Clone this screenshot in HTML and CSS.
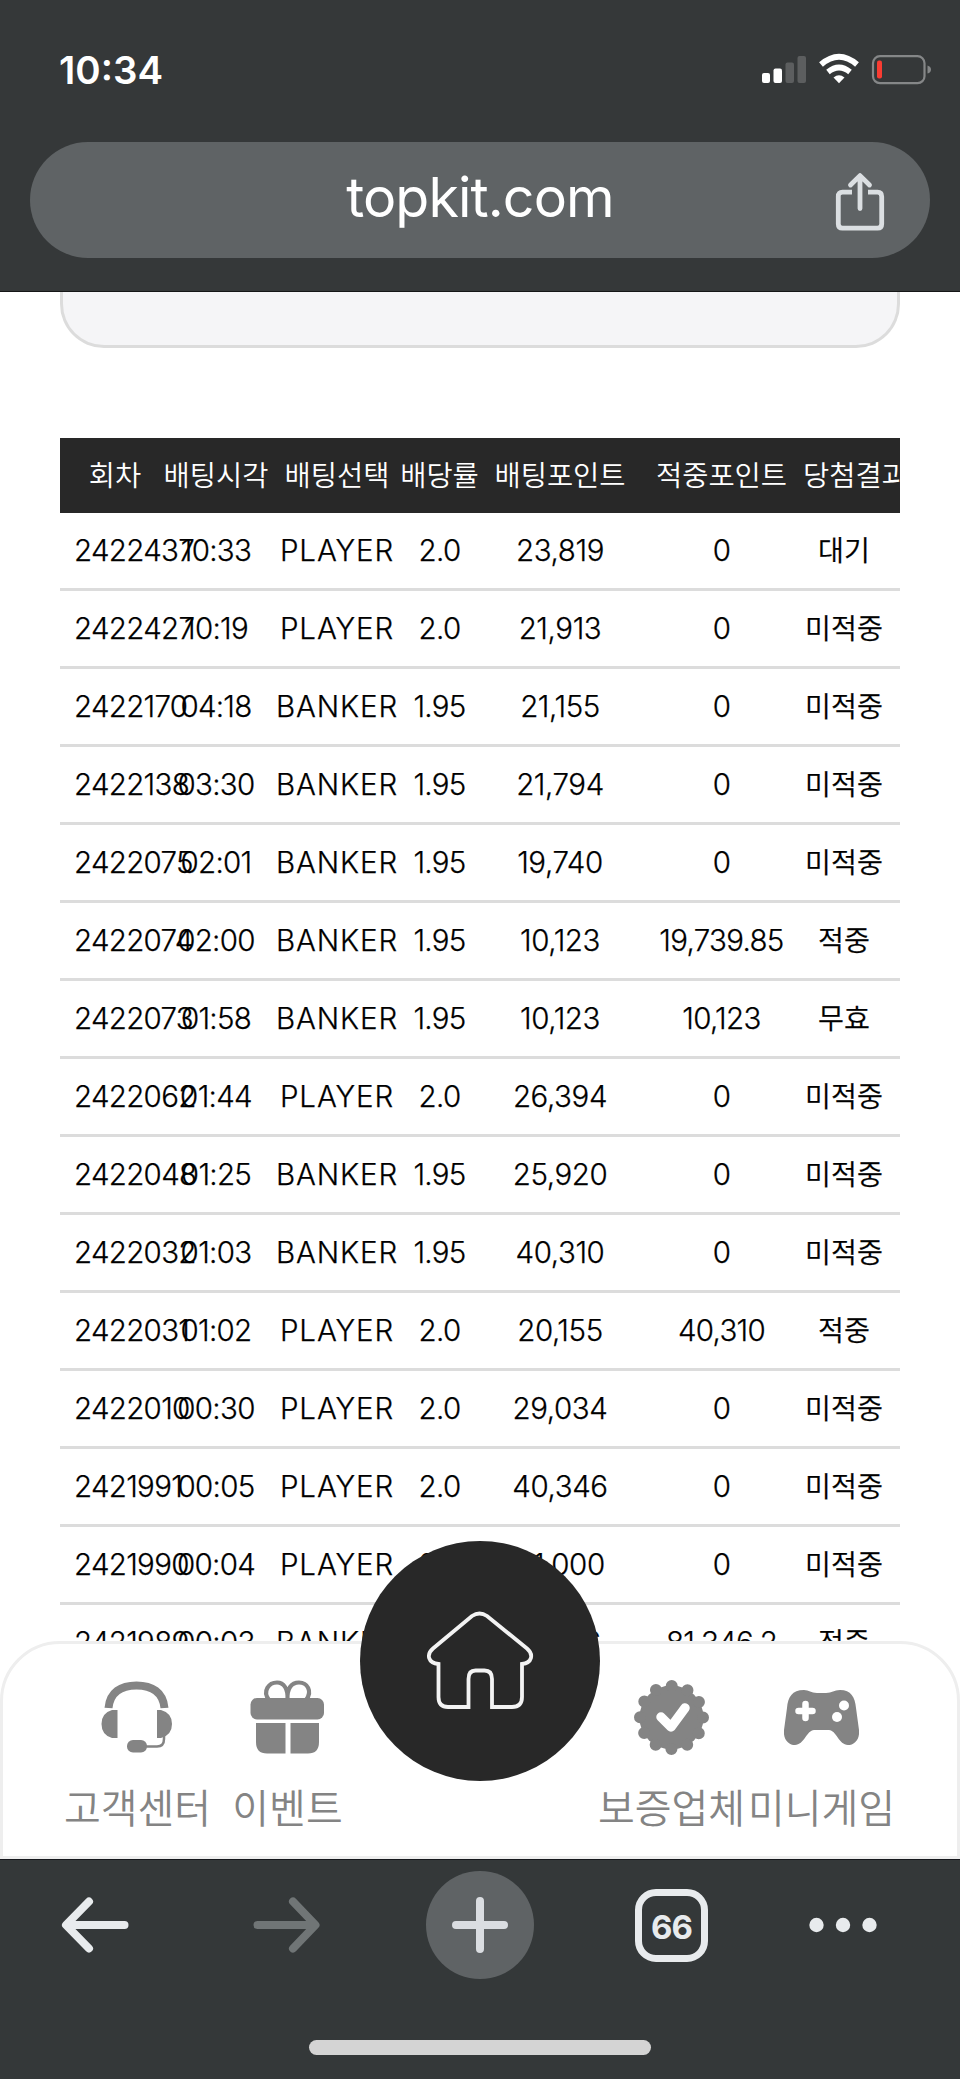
FILE: index.html
```html
<!DOCTYPE html>
<html lang="ko">
<head>
<meta charset="utf-8">
<title>topkit.com</title>
<link rel="stylesheet" href="styles.css">
</head>
<body>
<header class="browser-top">
  <div class="status">
    <span class="clock">10:34</span>
    <svg class="status-icons" width="172" height="32" viewBox="0 0 172 32">
      <g fill="#fff"><rect x="2" y="20" width="8" height="10" rx="2"/><rect x="13.500" y="15.500" width="8.500" height="14.500" rx="2"/></g>
      <g fill="#5c5e5f"><rect x="25.500" y="9.500" width="8.500" height="20.500" rx="2"/><rect x="37.500" y="3" width="8.500" height="27" rx="2"/></g>
      <g fill="none" stroke="#fff"><path d="M61 11.500Q79-4 97 11.500" stroke-width="5.800"/><path d="M68 19Q79 10 90 19" stroke-width="5.600"/></g>
      <path d="M73.500 24.500Q79 20 84.500 24.500L79 30.200Z" fill="#fff"/>
      <rect x="113" y="3.200" width="51.500" height="27" rx="7" fill="none" stroke="#858788" stroke-width="2.200"/>
      <rect x="117" y="7.500" width="5" height="18" rx="2" fill="#fa3c32"/>
      <path d="M167.500 12.500Q171 13.500 171 16.500T167.500 20.500Z" fill="#858788"/>
    </svg>
  </div>
  <div class="address">
    <span class="url">topkit.com</span>
    <svg class="share" width="50" height="60" viewBox="0 0 50 60" fill="none" stroke="#dbdfe2" stroke-width="4.800" stroke-linecap="round" stroke-linejoin="round">
      <path d="M17 20.200H7.500Q3.300 20.200 3.300 24.400V52Q3.300 56.200 7.500 56.200H42.500Q46.700 56.200 46.700 52V24.400Q46.700 20.200 42.500 20.200H33" stroke-linecap="butt"/>
      <path d="M25 36.500V4M15.500 13L25 3.600L34.500 13"/>
    </svg>
  </div>
</header>

<main class="page">
  <div class="panel"></div>
  <div class="bets">
    <div class="row head"><span>회차</span><span>배팅시각</span><span>배팅선택</span><span>배당률</span><span>배팅포인트</span><span>적중포인트</span><span>당첨결과</span></div>
    <div class="row"><span>2422437</span><span>10:33</span><span>PLAYER</span><span>2.0</span><span>23,819</span><span>0</span><span>대기</span></div>
    <div class="row"><span>2422427</span><span>10:19</span><span>PLAYER</span><span>2.0</span><span>21,913</span><span>0</span><span>미적중</span></div>
    <div class="row"><span>2422170</span><span>04:18</span><span>BANKER</span><span>1.95</span><span>21,155</span><span>0</span><span>미적중</span></div>
    <div class="row"><span>2422138</span><span>03:30</span><span>BANKER</span><span>1.95</span><span>21,794</span><span>0</span><span>미적중</span></div>
    <div class="row"><span>2422075</span><span>02:01</span><span>BANKER</span><span>1.95</span><span>19,740</span><span>0</span><span>미적중</span></div>
    <div class="row"><span>2422074</span><span>02:00</span><span>BANKER</span><span>1.95</span><span>10,123</span><span>19,739.85</span><span>적중</span></div>
    <div class="row"><span>2422073</span><span>01:58</span><span>BANKER</span><span>1.95</span><span>10,123</span><span>10,123</span><span>무효</span></div>
    <div class="row"><span>2422062</span><span>01:44</span><span>PLAYER</span><span>2.0</span><span>26,394</span><span>0</span><span>미적중</span></div>
    <div class="row"><span>2422048</span><span>01:25</span><span>BANKER</span><span>1.95</span><span>25,920</span><span>0</span><span>미적중</span></div>
    <div class="row"><span>2422032</span><span>01:03</span><span>BANKER</span><span>1.95</span><span>40,310</span><span>0</span><span>미적중</span></div>
    <div class="row"><span>2422031</span><span>01:02</span><span>PLAYER</span><span>2.0</span><span>20,155</span><span>40,310</span><span>적중</span></div>
    <div class="row"><span>2422010</span><span>00:30</span><span>PLAYER</span><span>2.0</span><span>29,034</span><span>0</span><span>미적중</span></div>
    <div class="row"><span>2421991</span><span>00:05</span><span>PLAYER</span><span>2.0</span><span>40,346</span><span>0</span><span>미적중</span></div>
    <div class="row"><span>2421990</span><span>00:04</span><span>PLAYER</span><span>2.0</span><span>41,000</span><span>0</span><span>미적중</span></div>
    <div class="row"><span>2421989</span><span>00:03</span><span>BANKER</span><span>1.95</span><span>41,716</span><span>81,346.2</span><span>적중</span></div>
  </div>

  <nav class="dock">
    <a class="dock-item">
      <svg width="75" height="75" viewBox="0 0 75 75" fill="#848484">
        <path d="M8.500 28C10 12 21 5.500 36.500 5.500S63 12 64.500 28" fill="none" stroke="#848484" stroke-width="8"/>
        <path d="M17.500 30H12Q1.500 33 1.500 44T12 58H17.500ZM57 30H61Q72 33 72 44T61 58H57Z"/>
        <path d="M64 56V59Q64 66.500 57 66.500H46" fill="none" stroke="#848484" stroke-width="2.500"/>
        <rect x="27" y="60" width="20" height="12.500" rx="6"/>
      </svg>
      <span>고객센터</span>
    </a>
    <a class="dock-item">
      <svg width="75" height="75" viewBox="0 0 75 75" fill="#848484">
        <path d="M19 20C12 11 19 2.500 27 2.500C34 2.500 38 9 37.500 19C37 9 41 2.500 49 2.500C57 2.500 63 11 56 20" fill="none" stroke="#848484" stroke-width="4.200"/>
        <rect x=".500" y="18" width="73.500" height="21.500" rx="6.500"/>
        <path d="M6 43H35.500V73.500H17Q6 73.500 6 62ZM40.500 43H69V62Q69 73.500 58 73.500H40.500Z"/>
      </svg>
      <span>이벤트</span>
    </a>
    <a class="dock-home">
      <svg width="110" height="102" viewBox="0 0 110 102" fill="none" stroke="#f3f3f3" stroke-width="3.800">
        <path d="M47 6Q54.500 1 62 6L102 38.500C109 44.500 107 53 97 54V87Q97 97 87 97H67V69Q67 60.500 59.500 60.500H50.500Q43.500 60.500 43.500 69V97H23Q13.500 97 13.500 87V54C3 53 1 44.500 8 38.500Z"/>
      </svg>
    </a>
    <a class="dock-item">
      <svg width="75" height="75" viewBox="0 0 75 75">
        <circle cx="37.500" cy="37.500" r="32" fill="#848484"/>
        <circle cx="37.500" cy="37.500" r="31.500" fill="none" stroke="#848484" stroke-width="12" stroke-linecap="round" stroke-dasharray="0 16.493"/>
        <path d="M27 37L37 47L51 28" fill="none" stroke="#fff" stroke-width="9.500" stroke-linecap="round" stroke-linejoin="round"/>
      </svg>
      <span>보증업체</span>
    </a>
    <a class="dock-item">
      <svg width="75" height="75" viewBox="0 0 75 75">
        <path fill="#848484" d="M20 10C25 10 27 13 33 13H42C48 13 50 10 56 10C67 10 71 17 72 28L75 50C76 60 70 65 64 65C55 65 52 50 45 50H30C23 50 20 65 11 65C5 65-1 60 0 50L3 28C4 17 8 10 20 10Z"/>
        <path d="M21.500 24V38M14.500 31H28.500" stroke="#fff" stroke-width="6.500" stroke-linecap="round"/>
        <circle cx="60" cy="25.500" r="5" fill="#fff"/><circle cx="53" cy="37" r="5" fill="#fff"/>
      </svg>
      <span>미니게임</span>
    </a>
  </nav>
</main>

<footer class="browser-bottom">
  <div class="tools">
    <svg class="back" width="68" height="56" viewBox="0 0 68 56" fill="none" stroke="#e8ebed" stroke-width="8" stroke-linecap="round" stroke-linejoin="round"><path d="M63.500 28H6M28 4.500L5 28L28 51.500"/></svg>
    <svg class="forward" width="68" height="56" viewBox="0 0 68 56" fill="none" stroke="#707576" stroke-width="8" stroke-linecap="round" stroke-linejoin="round"><path d="M5.500 28H63M41 4.500L63.500 28L41 51.500"/></svg>
    <div class="new-tab"><svg width="56" height="56" viewBox="0 0 56 56" stroke="#dadde1" stroke-width="8" stroke-linecap="round"><path d="M28 4V52M4 28H52"/></svg></div>
    <div class="tabs">66</div>
    <svg width="68" height="16" viewBox="0 0 68 16" fill="#e8ebed"><circle cx="7.500" cy="8" r="7.200"/><circle cx="34" cy="8" r="7.200"/><circle cx="60.500" cy="8" r="7.200"/></svg>
  </div>
  <div class="home-bar"></div>
</footer>
</body>
</html>
```

FILE: styles.css
```css
* { box-sizing: border-box; }

body {
  margin: 0;
  width: 960px;
  height: 2079px;
  display: flex;
  flex-direction: column;
  overflow: hidden;
  background: #fff;
  font-family: Inter, "Noto Sans CJK KR", sans-serif;
}

svg { display: block; }

.browser-top {
  height: 292px;
  flex: none;
  padding: 0 30px;
  background: #353839;
  border-bottom: 1px solid #151617;
}

.status {
  height: 142px;
  display: flex;
  justify-content: space-between;
  padding: 46px 0 0 29px;
}

.clock {
  font: 600 38.5px/48px Inter, sans-serif;
  color: #fff;
}

.status-icons { margin: 7px -2px 0 0; }

.address {
  height: 116px;
  border-radius: 58px;
  background: #5f6365;
  display: grid;
  grid-template-columns: 100px 1fr 100px;
  align-items: center;
}

.url {
  grid-column: 2;
  padding-bottom: 6px;
  text-align: center;
  font: 400 55.5px/70px Inter, sans-serif;
  letter-spacing: -0.9px;
  color: #fff;
}

.share { margin: 4px 0 0 5px; }

.page {
  position: relative;
  height: 1567px;
  flex: none;
  padding: 0 60px;
  overflow: hidden;
}

.panel {
  height: 56px;
  background: #f5f5f7;
  border: 3px solid #dcdcdc;
  border-top: 0;
  border-radius: 0 0 44px 44px;
}

.bets {
  margin-top: 90px;
  overflow: hidden;
}

.row {
  height: 78px;
  padding-bottom: 2px;
  display: grid;
  grid-template-columns: 111px 90px 152px 53px 188px 135px 111px;
  align-items: center;
  border-bottom: 3px solid #dcdcdc;
  font-size: 29.5px;
  line-height: 40px;
  font-weight: 300;
  letter-spacing: -0.7px;
  color: #000;
  white-space: nowrap;
  -webkit-text-stroke: 0.25px currentColor;
}

.row span {
  display: flex;
  justify-content: center;
}

.row span:first-child,
.row span:last-child {
  display: block;
  padding: 0 15px 0 14px;
  text-align: center;
}

.row span:nth-child(3) { letter-spacing: 0.9px; }

.row span:nth-child(5) { letter-spacing: -0.4px; }

.row span:last-child {
  font-family: "Noto Sans CJK KR", sans-serif;
  font-size: 28.200px;
  font-weight: 350;
  letter-spacing: 0;
  padding-bottom: 2px;
}

.row.head {
  height: 75px;
  border: 0;
  background: #282828;
}

.row.head span {
  color: #fff;
  padding-bottom: 2px;
  font-family: "Noto Sans CJK KR", sans-serif;
  font-size: 28.500px;
  font-weight: 350;
  letter-spacing: 0;
  -webkit-text-stroke: 0;
}

.dock {
  position: absolute;
  left: 0;
  right: 0;
  bottom: 0;
  height: 218px;
  display: flex;
  justify-content: center;
  background: #fff;
  border: 3px solid #eee;
  border-radius: 60px 60px 0 0;
}

.dock-item {
  width: 150px;
  padding: 36px 1px 0 0;
  display: flex;
  flex-direction: column;
  align-items: center;
  color: #848484;
  font: 350 40px/58px "Noto Sans CJK KR", sans-serif;
  white-space: nowrap;
}

.dock-item span { margin-top: 22px; }

.dock-home {
  width: 240px;
  height: 240px;
  margin: -103px -3px 0;
  border-radius: 50%;
  background: #282828;
  display: flex;
  align-items: center;
  justify-content: center;
}

.browser-bottom {
  height: 220px;
  flex: none;
  background: #343839;
  border-top: 1px solid #15171c;
}

.tools {
  height: 130px;
  padding-left: 61px;
  display: flex;
  align-items: center;
  gap: 101px;
}

.back { margin-right: 22px; }
.forward { margin-right: 5px; }

.new-tab {
  width: 108px;
  height: 108px;
  border-radius: 50%;
  background: #5f6365;
  display: flex;
  align-items: center;
  justify-content: center;
}

.tabs {
  width: 73px;
  height: 73px;
  border: 7px solid #e8ebed;
  border-radius: 21px;
  font: 700 33px/62px Inter, sans-serif;
  letter-spacing: -1px;
  text-align: center;
  color: #e8ebed;
}

.home-bar {
  width: 342px;
  height: 15px;
  margin: 50px auto 0;
  border-radius: 8px;
  background: #d4d4d4;
}
```
